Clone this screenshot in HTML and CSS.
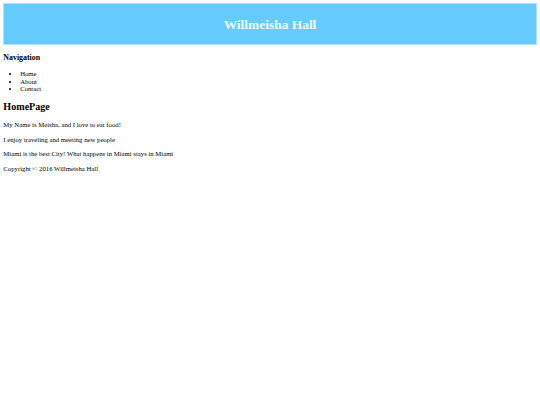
FILE: index.html
```html
<!DOCTYPE html>
<html>
<head>
<meta charset="utf-8">
<title>Willmeisha Hall</title>
<link rel="stylesheet" href="styles.css">
</head>
<body>
<header class="banner">
  <h1 class="banner-title">Willmeisha Hall</h1>
</header>
<nav class="nav">
  <h3 class="nav-title">Navigation</h3>
  <ul class="nav-list">
    <li>Home</li>
    <li>About</li>
    <li>Contact</li>
  </ul>
</nav>
<main class="content">
  <h2 class="page-title">HomePage</h2>
  <p class="text">My Name is Meisha, and I love to eat food!</p>
  <p class="text">I enjoy traveling and meeting new people</p>
  <p class="text">Miami is the best City! What happens in Miami stays in Miami</p>
</main>
<footer class="footer">
  <p class="text">Copyright © 2016 Willmeisha Hall</p>
</footer>
</body>
</html>
```
FILE: styles.css
```css
html {
  background: #ffffff;
}
body {
  margin: 3.36px;
  font-family: "Liberation Serif", "Times New Roman", serif;
  font-size: 6.72px;
  line-height: 7.73px;
  color: #000000;
}
.banner {
  background: #66ccff;
  border: 1px solid #aee3ff;
  height: 40px;
  display: flex;
  align-items: center;
  justify-content: center;
}
.banner-title {
  margin: 0;
  font-size: 13.44px;
  line-height: 15.5px;
  font-weight: bold;
  color: #eef8ff;
}
.nav-title {
  margin: 7.86px 0;
  font-size: 7.86px;
  line-height: 9.04px;
  font-weight: bold;
}
.nav-list {
  margin: 6.72px 0;
  padding-left: 16.8px;
  line-height: 7.6px;
}
.page-title {
  margin: 8.37px 0;
  font-size: 10.08px;
  line-height: 11.6px;
  font-weight: bold;
}
.text {
  margin: 6.72px 0;
}
```
